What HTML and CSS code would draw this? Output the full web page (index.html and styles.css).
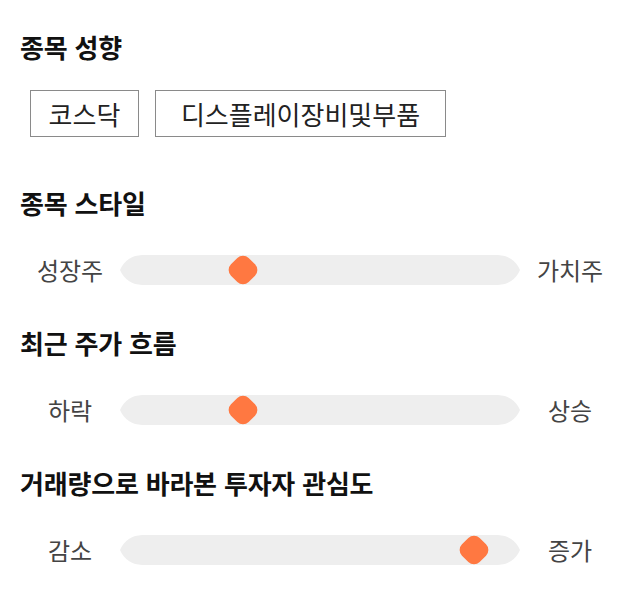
FILE: index.html
```html
<!DOCTYPE html>
<html lang="ko">
<head>
<meta charset="utf-8">
<title>종목 성향</title>
<link rel="stylesheet" href="styles.css">
</head>
<body>
<main class="page">
  <section class="section section-tags">
    <h2 class="title">종목 성향</h2>
    <div class="tags">
      <span class="tag tag-short">코스닥</span>
      <span class="tag tag-long">디스플레이장비및부품</span>
    </div>
  </section>
  <section class="section">
    <h2 class="title">종목 스타일</h2>
    <div class="row">
      <span class="label">성장주</span>
      <div class="track"><span class="thumb" style="left: 30.75%"></span></div>
      <span class="label">가치주</span>
    </div>
  </section>
  <section class="section">
    <h2 class="title">최근 주가 흐름</h2>
    <div class="row">
      <span class="label">하락</span>
      <div class="track"><span class="thumb" style="left: 30.75%"></span></div>
      <span class="label">상승</span>
    </div>
  </section>
  <section class="section">
    <h2 class="title">거래량으로 바라본 투자자 관심도</h2>
    <div class="row">
      <span class="label">감소</span>
      <div class="track"><span class="thumb" style="left: 88.4%"></span></div>
      <span class="label">증가</span>
    </div>
  </section>
</main>
</body>
</html>
```
FILE: styles.css
```css
html, body {
  margin: 0;
  padding: 0;
  background: #ffffff;
}

body {
  font-family: "Noto Sans CJK KR", "Noto Sans", sans-serif;
  color: #111111;
}

.page {
  padding: 32px 0 0 0;
  display: flex;
  flex-direction: column;
}

.section {
  display: flex;
  flex-direction: column;
  margin-bottom: 43px;
}

.section-tags {
  margin-bottom: 51px;
}

.title {
  margin: 0 0 37px 20px;
  font-size: 26px;
  line-height: 30px;
  font-weight: 700;
  color: #111111;
  letter-spacing: -0.2px;
}

.section-tags .title {
  margin-bottom: 28px;
}

.tags {
  display: flex;
  gap: 16px;
  padding-left: 30px;
}

.tag {
  display: flex;
  align-items: center;
  justify-content: center;
  height: 47px;
  box-sizing: border-box;
  border: 1px solid #8a8a8a;
  font-size: 26px;
  color: #222222;
}

.tag-short {
  width: 109px;
}

.tag-long {
  width: 291px;
}

.row {
  display: flex;
  align-items: center;
  padding: 0 20px;
  height: 30px;
}

.label {
  width: 100px;
  flex: none;
  text-align: center;
  font-size: 24px;
  line-height: 30px;
  color: #444444;
}

.track {
  flex: 1;
  height: 30px;
  position: relative;
}

.track::before {
  content: "";
  position: absolute;
  inset: 0;
  background: #eeeeee;
  clip-path: polygon(
    22px 0, 15.2px 1px, 12.5px 2px, 8.9px 4px, 6.3px 6px, 3.5px 9px, 1.5px 12px, 0 15px,
    1.5px 18px, 3.5px 21px, 6.3px 24px, 8.9px 26px, 12.5px 28px, 15.2px 29px, 22px 30px,
    calc(100% - 22px) 30px, calc(100% - 15.2px) 29px, calc(100% - 12.5px) 28px, calc(100% - 8.9px) 26px,
    calc(100% - 6.3px) 24px, calc(100% - 3.5px) 21px, calc(100% - 1.5px) 18px, 100% 15px,
    calc(100% - 1.5px) 12px, calc(100% - 3.5px) 9px, calc(100% - 6.3px) 6px, calc(100% - 8.9px) 4px,
    calc(100% - 12.5px) 2px, calc(100% - 15.2px) 1px, calc(100% - 22px) 0
  );
}

.thumb {
  position: absolute;
  top: 50%;
  width: 25px;
  height: 25px;
  border-radius: 8px;
  background: #ff7841;
  transform: translate(-50%, -50%) rotate(45deg);
}
```
